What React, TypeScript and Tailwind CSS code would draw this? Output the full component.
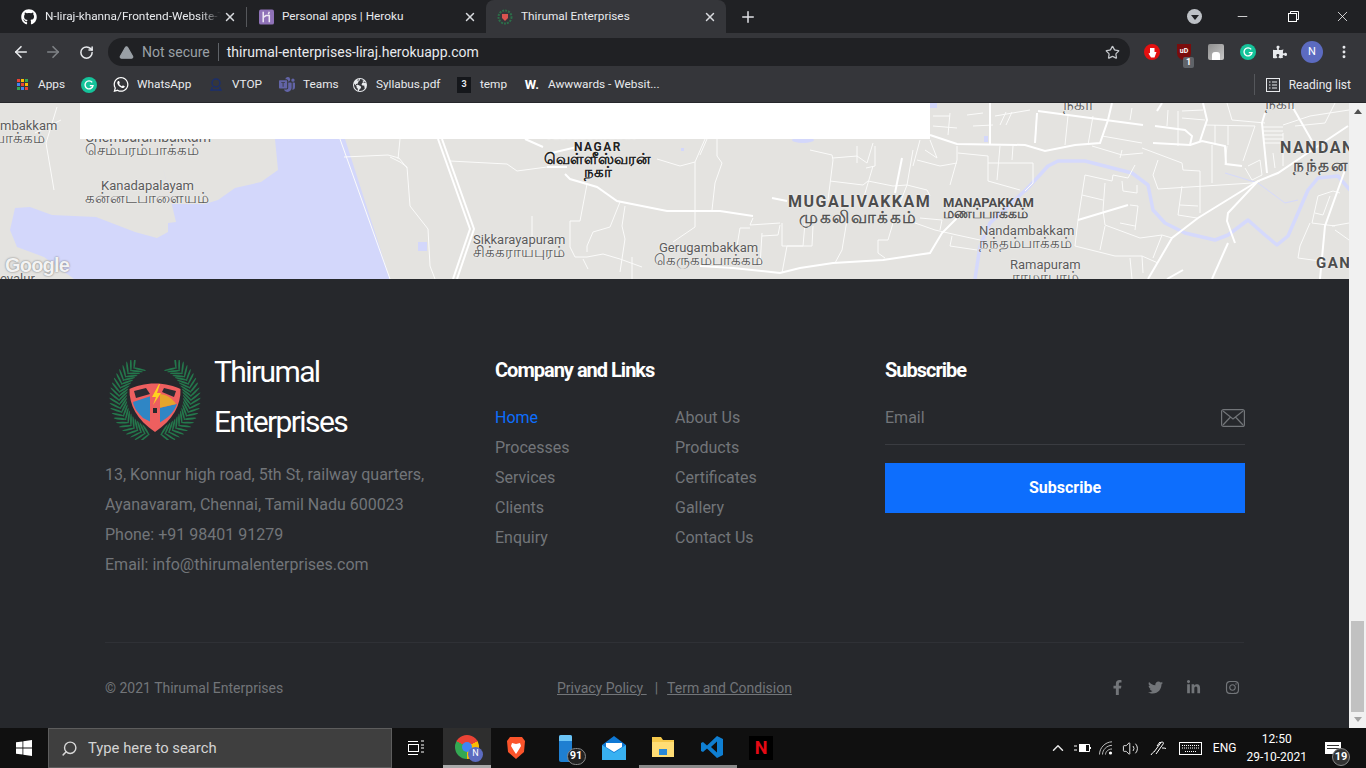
import { FaGithub, FaWhatsapp, FaFacebookF, FaTwitter, FaLinkedinIn, FaInstagram, FaPuzzlePiece } from "react-icons/fa";
import { BsMicrosoftTeams } from "react-icons/bs";
import { FiSearch, FiChevronUp } from "react-icons/fi";
import { IoEarth } from "react-icons/io5";
import { X, Plus, ArrowLeft, ArrowRight, RotateCw, Star, TriangleAlert, Minus, MoreVertical, Volume2 } from "lucide-react";
import type { ReactNode } from "react";

const ui = "font-['Roboto',sans-serif]";

const majorRoads = [
  "438,139 470,229 453,279",
  "442,139 474,229 457,279",
  "565,174 570,179 597,187 617,201 667,211 720,211 753,216",
  "525,139 543,147",
  "547,154 577,147",
  "547,167 567,167",
  "772,198 787,201",
  "902,158 895,193",
  "700,266 733,268 780,273 800,268 833,263 883,260 930,253 942,233 957,218",
  "930,135 957,144 1025,145 1045,151 1075,145 1100,143 1108,120 1112,103",
  "990,103 990,145",
  "1038,111 1143,125",
  "1037,113 1035,143",
  "1155,126 1185,130 1192,136 1190,145 1153,143",
  "1190,145 1202,141 1225,146 1226,164 1242,166",
  "1265,113 1262,123 1267,173",
  "1348,126 1318,146 1278,173 1258,181 1228,213 1227,221 1232,235 1235,243",
  "1258,181 1198,218 1172,238 1148,279",
  "1228,243 1212,279",
  "1292,106 1312,141",
  "1345,170 1325,226 1320,279",
  "1078,220 1128,205",
  "1162,103 1157,111",
  "1167,279 1183,270",
  "1203,103 1207,120 1200,141",
];

const minorRoads = [
  "57,107 46,143 54,190",
  "35,133 61,120",
  "340,139 390,279",
  "344,157 388,155 399,158 407,168",
  "390,157 400,162 407,167 410,206 428,229 430,266 435,279",
  "400,139 398,159",
  "450,161 507,164 517,171 547,167",
  "587,184 580,221 570,221 570,247 575,257 587,257 603,254 620,259 642,267",
  "620,202 610,227 593,232 587,246 587,252",
  "625,206 622,226 625,239 620,272",
  "632,257 632,279",
  "695,162 695,227 673,242",
  "657,159 680,166 695,162 705,139",
  "532,216 532,236",
  "583,259 588,269",
  "717,139 717,156 722,163 715,183 712,210",
  "700,155 707,139",
  "810,150 832,155 833,160 828,200",
  "833,158 857,156 867,163 873,143",
  "857,146 857,163",
  "875,146 875,166 866,168",
  "830,181 863,185 868,181 893,186 907,185 927,190 930,196",
  "873,166 868,183 863,200",
  "913,150 907,185 900,203",
  "920,140 913,166",
  "917,160 940,166 957,163",
  "930,140 937,158 925,150",
  "957,146 957,160 950,185",
  "958,153 988,156 988,181 1020,190",
  "1000,146 997,180",
  "1013,146 1012,160",
  "988,163 1033,163 1033,183 1025,191",
  "753,218 750,225 780,223",
  "782,223 782,246 803,246 805,223",
  "750,228 740,228 737,246",
  "762,236 778,235 780,225",
  "762,233 760,266",
  "787,246 782,273",
  "813,226 812,246 787,246",
  "847,220 842,250 835,263",
  "915,223 935,230 957,235 980,240",
  "893,223 888,240 878,240 878,253 885,258",
  "952,236 950,246 977,250",
  "920,218 942,220 940,230",
  "933,126 957,128",
  "933,116 950,116",
  "950,113 948,135",
  "967,115 983,113",
  "973,126 993,125",
  "995,116 1030,110",
  "1000,125 1006,112",
  "1006,125 1012,112",
  "1085,175 1078,220 1075,246",
  "1085,175 1112,181 1113,175 1128,178 1135,165",
  "1105,183 1103,210 1105,225 1140,238 1162,235 1172,238",
  "1082,195 1103,200",
  "1130,205 1138,206 1135,230",
  "1122,181 1123,191 1137,193 1137,185",
  "1120,223 1135,226",
  "1075,246 1115,256 1142,256 1158,263",
  "1162,235 1153,258",
  "1130,258 1132,279",
  "1142,256 1143,273",
  "1100,250 1105,226",
  "1142,148 1182,163 1183,170 1200,171 1200,213",
  "1158,160 1153,175 1158,189 1252,183 1260,181",
  "1182,186 1178,215 1197,218",
  "1180,205 1198,206",
  "1212,145 1212,183",
  "1227,146 1225,165",
  "1228,125 1228,145",
  "1205,125 1255,126 1243,161",
  "1215,125 1215,145",
  "1102,136 1142,143",
  "1092,146 1122,155 1143,153",
  "1122,150 1120,158",
  "1068,116 1065,145",
  "1093,116 1088,145",
  "1132,108 1130,120",
  "1168,110 1167,126",
  "1178,111 1178,146",
  "1182,118 1205,120",
  "1182,111 1203,110",
  "1263,127 1283,127",
  "1263,131 1283,131",
  "1263,135 1283,135",
  "1263,139 1283,139",
  "1263,143 1283,143",
  "1283,133 1283,166",
  "1273,153 1275,168",
  "1248,166 1260,160 1262,175 1252,180 1245,168",
  "1318,196 1312,223 1335,226",
  "1318,196 1333,191 1340,193",
  "1315,213 1323,215 1330,196",
  "1332,226 1349,223",
  "1335,230 1349,240",
  "1310,223 1300,246 1298,258 1320,261",
  "1227,103 1232,120 1265,123",
  "1295,126 1325,123 1335,103",
  "1283,125 1310,116 1349,110",
];

const rivers = [
  "1025,191 1048,166 1058,161 1085,161 1132,173 1148,185 1153,210 1165,223 1185,233 1215,240 1228,235 1248,220 1265,235 1277,245 1288,236 1308,190 1318,178 1338,176 1350,190",
  "1030,186 990,223 980,246 975,279",
];

const labels = [
  { x: 0, y: 125, t: "mbakkam", s: 13 },
  { x: -6, y: 138, t: "பாக்கம்", s: 15 },
  { x: 85, y: 137, t: "Chembarambakkam", s: 14 },
  { x: 85, y: 150, t: "செம்பரம்பாக்கம்", s: 15 },
  { x: 101, y: 185, t: "Kanadapalayam", s: 13 },
  { x: 85, y: 198, t: "கன்னடபாளையம்", s: 15 },
  { x: 0, y: 278, t: "evalur", s: 13 },
  { x: 545, y: 135, t: "VELLEESWARAN", s: 12, b: true, d: true },
  { x: 574, y: 147, t: "NAGAR", s: 12, b: true, k: true, d: true },
  { x: 544, y: 159, t: "வெள்ளீஸ்வரன்", s: 15, b: true, d: true },
  { x: 584, y: 172, t: "நகர்", s: 15, b: true, d: true },
  { x: 473, y: 239, t: "Sikkarayapuram", s: 13 },
  { x: 473, y: 252, t: "சிக்கராயபுரம்", s: 15 },
  { x: 659, y: 247, t: "Gerugambakkam", s: 13 },
  { x: 654, y: 260, t: "கெருகம்பாக்கம்", s: 15 },
  { x: 788, y: 202, t: "MUGALIVAKKAM", s: 16, b: true, k: true },
  { x: 799, y: 217, t: "முகலிவாக்கம்", s: 17, h: true, k: true },
  { x: 943, y: 202, t: "MANAPAKKAM", s: 13, b: true },
  { x: 943, y: 213, t: "மணப்பாக்கம்", s: 14, h: true },
  { x: 979, y: 230, t: "Nandambakkam", s: 13 },
  { x: 979, y: 243, t: "நந்தம்பாக்கம்", s: 15 },
  { x: 1010, y: 264, t: "Ramapuram", s: 13 },
  { x: 1012, y: 277, t: "ராமாபுரம்", s: 15 },
  { x: 1063, y: 104, t: "நகர்", s: 17 },
  { x: 1265, y: 103, t: "நகர்", s: 17 },
  { x: 1280, y: 148, t: "NANDAN", s: 16, b: true, k: true },
  { x: 1293, y: 165, t: "நந்தன", s: 17, h: true, k: true },
  { x: 1316, y: 263, t: "GAN", s: 15, b: true, k: true },
];

function MapArea() {
  return (
    <div className="relative h-[176px] w-full overflow-hidden bg-[#e4e3e0] font-['Roboto','Noto_Sans',sans-serif]">
      <svg className="absolute inset-0" width="1349" height="176" viewBox="0 103 1349 176" fill="none">
        <path
          d="M275 139 L278 170 L261 182 L235 188 L218 200 L205 204 L172 204 L163 168 L176 222 L168 223 L168 232 L157 238 L135 232 L96 217 L52 215 L30 207 L15 208 L10 230 L17 247 L44 257 L74 279 L390 279 L345 139 Z"
          fill="#d3d7fb"
        />
        <rect x="930" y="103" width="7" height="5" fill="#d3d7fb" />
        <rect x="418" y="242" width="9" height="9" fill="#d3d7fb" />
        <rect x="681" y="148" width="3" height="3" fill="#d3d7fb" />
        <ellipse cx="803" cy="140" rx="11" ry="3" fill="#d3d7fb" />
        <rect x="984" y="136" width="4" height="6" fill="#d3d7fb" />
        {rivers.map((r) => (
          <polyline key={r} points={r} stroke="#d5d9fc" strokeWidth="3.5" strokeLinejoin="round" />
        ))}
        <polyline points="1225,173 1258,183 1285,203 1298,200" stroke="#d5d9fc" strokeWidth="1" />
        {minorRoads.map((r) => (
          <polyline key={r} points={r} stroke="#fbfbfa" strokeWidth="1" />
        ))}
        {majorRoads.map((r) => (
          <polyline key={r} points={r} stroke="#ffffff" strokeWidth="2" />
        ))}
      </svg>
      {labels.map((l) => (
        <span
          key={l.t + l.y}
          className={`absolute -translate-y-1/2 whitespace-nowrap leading-none [text-shadow:0_0_2px_#ffffff] ${l.b ? "font-bold" : "font-normal"} ${l.k ? "tracking-[1.5px]" : ""} ${l.h ? "[-webkit-text-stroke:0.4px_#4d4d4d]" : ""} ${l.d ? "text-[#222222]" : l.b || l.h ? "text-[#4d4d4d]" : "text-[#5b5b5b]"}`}
          style={{ left: l.x, top: l.y - 103, fontSize: l.s }}
        >
          {l.t}
        </span>
      ))}
      <span className="absolute bottom-[2px] left-[5px] font-['Liberation_Sans',sans-serif] text-[20px] font-bold leading-[24px] tracking-[-0.8px] text-[#f3f3f3] [text-shadow:0_0_2px_#6b6b6b]">
        Google
      </span>
      {/* white card from the section above */}
      <div className="absolute left-[80px] top-0 h-[36px] w-[850px] bg-white" />
    </div>
  );
}

function Wreath() {
  const leaves = [];
  for (let i = 0; i < 22; i++) {
    const a = ((100 + i * 6.4) * Math.PI) / 180;
    const sx = 47 + 36 * Math.cos(a);
    const sy = 38 + 37 * Math.sin(a);
    const dir = Math.atan2(Math.cos(a), -Math.sin(a));
    for (const off of [0.85, -0.85]) {
      const d = dir + off;
      leaves.push({ cx: sx + 5.5 * Math.cos(d), cy: sy + 5.5 * Math.sin(d), r: (d * 180) / Math.PI });
    }
  }
  return (
    <>
      {leaves.map((l, i) => (
        <g key={i}>
          <ellipse cx={l.cx} cy={l.cy} rx="6.5" ry="0.9" fill="#24784c" transform={`rotate(${l.r} ${l.cx} ${l.cy})`} />
          <ellipse cx={94 - l.cx} cy={l.cy} rx="6.5" ry="0.9" fill="#24784c" transform={`rotate(${180 - l.r} ${94 - l.cx} ${l.cy})`} />
        </g>
      ))}
    </>
  );
}

function Logo() {
  return (
    <svg width="95" height="80" viewBox="0 0 95 80" className="mt-[14px] ml-[3px] shrink-0">
      <Wreath />
      <path d="M47 22 C58 22 68 25 74 28 C75 46 66 62 47 74 C28 62 19 46 20 28 C26 25 36 22 47 22 Z" fill="#26282c" />
      <path d="M47 23.5 C57 23.5 67 26 72.5 29 C73 45 65 60 47 72 C29 60 21 45 21.5 29 C27 26 37 23.5 47 23.5 Z" fill="#ee5f5f" />
      <path d="M25 42 L43 36 L43 62 L35 58 C30 53 26 48 25 42 Z" fill="#2f86c5" />
      <path d="M51 48 L69 44 C66 52 60 58 51 63 Z" fill="#2f86c5" />
      <path d="M51 34 C58 34 64 38 68 44 L51 48 Z" fill="#e5a52c" />
      <path d="M26 31 L38 28 L42 34 L28 38 Z" fill="#2b2b33" />
      <path d="M68 31 L56 28 L54 32 L66 37 Z" fill="#2b2b33" />
      <path d="M42 33 L52 33 L52 64 L47 69 L42 64 Z" fill="#ee5f5f" />
      <path d="M51 24 L44 37 L48 37 L45 45 L53 33 L49 33 L52 24 Z" fill="#ffd21f" />
      <rect x="45" y="48" width="4" height="5" fill="#26282c" />
    </svg>
  );
}

function BrowserTab(props: { icon: ReactNode; title: string; active?: boolean; width: string; fade?: boolean }) {
  return (
    <div className={`flex h-[33px] items-center pl-[10px] pr-[9px] ${props.width} ${props.active ? "rounded-t-[8px] bg-[#35363a]" : ""}`}>
      <span className="flex w-[17px] shrink-0 justify-center">{props.icon}</span>
      <span className={`ml-[8px] flex-1 overflow-hidden whitespace-nowrap text-[11.8px] text-[#e8eaed] ${props.fade ? "[mask-image:linear-gradient(90deg,#000_88%,transparent)]" : ""}`}>
        {props.title}
      </span>
      <X size={14} strokeWidth={2.5} className="ml-[2px] shrink-0 text-[#d8dade]" />
    </div>
  );
}

function Bookmark(props: { icon: ReactNode; label: string; width: string }) {
  return (
    <div className={`flex items-center ${props.width}`}>
      <span className="flex w-[16px] shrink-0 justify-center">{props.icon}</span>
      <span className="ml-[8px] whitespace-nowrap text-[11.8px] text-[#e8eaed]">{props.label}</span>
    </div>
  );
}

function GrammarlyBadge(props: { size: number }) {
  return (
    <svg width={props.size} height={props.size} viewBox="0 0 16 16">
      <circle cx="8" cy="8" r="8" fill="#15c39a" />
      <path d="M11.2 5.4A4 4 0 1 0 12 8.6H8.8" stroke="#fff" strokeWidth="1.4" fill="none" />
    </svg>
  );
}

function TopChrome() {
  return (
    <div className={`shrink-0 bg-[#35363a] ${ui}`}>
      <div className="flex h-[33px] items-center bg-[#202124] pl-[10px]">
        <BrowserTab fade width="w-[236px]" title="N-liraj-khanna/Frontend-Website-Thirumal" icon={<FaGithub size={16} className="text-white" />} />
        <div className="h-[20px] w-px bg-[#55575b]" />
        <BrowserTab
          width="w-[239px]"
          title="Personal apps | Heroku"
          icon={
            <svg width="16" height="16" viewBox="0 0 16 16" className="ml-[2px]">
              <rect width="16" height="16" rx="2" fill="#8f72b8" />
              <path d="M4.5 2.5v11M4.5 8.5l3-2h3.5v7M11 2.5l-1 2.5" stroke="#eee8f5" strokeWidth="1.6" fill="none" />
            </svg>
          }
        />
        <BrowserTab
          active
          width="w-[240px]"
          title="Thirumal Enterprises"
          icon={
            <svg width="16" height="16" viewBox="0 0 16 16">
              <circle cx="8" cy="8" r="6.5" fill="none" stroke="#2c6e49" strokeWidth="2" strokeDasharray="2 1" />
              <path d="M5 5h6v4l-3 3-3-3z" fill="#d9534f" />
            </svg>
          }
        />
        <Plus size={18} strokeWidth={2} className="ml-[13px] text-[#dfe1e5]" />
        <div className="flex-1" />
        <div className="mr-[33px] flex h-[15px] w-[15px] items-center justify-center rounded-full bg-[#bdc1c6]">
          <div className="mt-[2px] border-x-[4px] border-t-[5px] border-x-transparent border-t-[#202124]" />
        </div>
        <Minus size={15} strokeWidth={1.25} className="mr-[38px] text-white" />
        <svg width="11" height="11" viewBox="0 0 11 11" fill="none" stroke="#fff" className="mr-[35px]">
          <rect x="0.5" y="2.5" width="8" height="8" />
          <path d="M2.5 2.5V0.5H10.5V8.5H8.5" />
        </svg>
        <X size={17} strokeWidth={1.1} className="mr-[15px] text-white" />
      </div>

      <div className="flex h-[38px] items-center pl-[12px]">
        <ArrowLeft size={18} strokeWidth={2.2} className="text-[#e8eaed]" />
        <ArrowRight size={18} strokeWidth={2.2} className="ml-[14px] text-[#7f8286]" />
        <RotateCw size={15} strokeWidth={2.4} className="ml-[17px] text-[#e8eaed]" />
        <div className="ml-[14px] flex h-[28px] w-[1022px] items-center rounded-full bg-[#202124] pl-[11px] pr-[10px]">
          <TriangleAlert size={15} className="fill-[#9aa0a6] text-[#9aa0a6]" />
          <span className="ml-[8px] text-[14px] text-[#9aa0a6]">Not secure</span>
          <div className="ml-[8px] h-[18px] w-px bg-[#5f6368]" />
          <span className="ml-[8px] flex-1 text-[14px] text-[#e8eaed]">thirumal-enterprises-liraj.herokuapp.com</span>
          <Star size={15} className="text-[#c4c7cb]" />
        </div>
        <div className="ml-[14px] flex h-[16px] w-[16px] items-center justify-center rounded-full border-[2px] border-[#e31010] bg-[#e31010]">
          <svg width="9" height="11" viewBox="0 0 9 11" fill="#fff">
            <path d="M2 1h4.5v4H8.5L6.5 10.5H3L0.5 6.5 2 6Z" />
          </svg>
        </div>
        <div className="relative ml-[17px] h-[16px] w-[14px] rounded-b-[7px] bg-[#7a0d0d] text-center text-[7px] font-bold leading-[14px] text-white">
          uD
          <span className="absolute -bottom-[8px] left-[6px] h-[11px] w-[11px] rounded-[2px] bg-[#5f6368] text-[9px] font-bold leading-[11px]">1</span>
        </div>
        <div className="ml-[17px] flex h-[16px] w-[16px] items-end justify-center rounded-[2px] bg-[linear-gradient(135deg,#8e8e8e,#c9c9c9)]">
          <div className="h-[8px] w-[8px] rounded-t-[3px] bg-white" />
        </div>
        <span className="ml-[16px]"><GrammarlyBadge size={16} /></span>
        <FaPuzzlePiece size={14} className="ml-[17px] text-[#e8eaed]" />
        <div className="ml-[14px] flex h-[22px] w-[22px] items-center justify-center rounded-full bg-[#5c6bc0] text-[11px] text-white">N</div>
        <MoreVertical size={16} strokeWidth={2.4} className="ml-[13px] text-[#e8eaed]" />
      </div>

      <div className="flex h-[32px] items-center border-b border-[#26272b] pb-[4px] pl-[14px]">
        <Bookmark
          width="w-[67px]"
          label="Apps"
          icon={
            <div className="grid grid-cols-3 gap-[1px]">
              {["bg-[#ea4335]", "bg-[#fbbc04]", "bg-[#34a853]", "bg-[#4285f4]", "bg-[#ea4335]", "bg-[#fbbc04]", "bg-[#34a853]", "bg-[#4285f4]", "bg-[#ea4335]"].map((c, i) => (
                <div key={i} className={`h-[3px] w-[3px] ${c}`} />
              ))}
            </div>
          }
        />
        <span className="w-[32px]"><GrammarlyBadge size={16} /></span>
        <Bookmark width="w-[95px]" label="WhatsApp" icon={<FaWhatsapp size={17} className="text-white" />} />
        <Bookmark
          width="w-[71px]"
          label="VTOP"
          icon={
            <svg width="16" height="16" viewBox="0 0 16 16" fill="none" stroke="#1c2f6b" strokeWidth="1.5">
              <circle cx="8" cy="6" r="4" />
              <path d="M2 13h12M4 10v4M12 10v4" />
            </svg>
          }
        />
        <Bookmark width="w-[73px]" label="Teams" icon={<BsMicrosoftTeams size={16} className="text-[#6264a7]" />} />
        <Bookmark width="w-[104px]" label="Syllabus.pdf" icon={<IoEarth size={16} className="text-[#e8eaed]" />} />
        <Bookmark
          width="w-[68px]"
          label="temp"
          icon={<div className="flex h-[16px] w-[14px] items-center justify-center bg-[#15171b] text-[9px] font-bold text-[#e8eaed]">3</div>}
        />
        <Bookmark width="w-[300px]" label="Awwwards - Websit..." icon={<span className="text-[13px] font-bold text-white">W.</span>} />
        <div className="flex-1" />
        <div className="mr-[11px] h-[21px] w-px bg-[#55575b]" />
        <svg width="14" height="14" viewBox="0 0 14 14" fill="none" stroke="#e8eaed">
          <rect x="0.5" y="0.5" width="13" height="13" />
          <path d="M3 4h1.5M6 4h5M3 7h1.5M6 7h5M3 10h1.5M6 10h5" />
        </svg>
        <span className="ml-[9px] mr-[15px] text-[12px] text-[#e8eaed]">Reading list</span>
      </div>
    </div>
  );
}

function Footer() {
  const links = ["Home", "About Us", "Processes", "Products", "Services", "Certificates", "Clients", "Gallery", "Enquiry", "Contact Us"];
  return (
    <footer className="h-[449px] bg-[#26282c] px-[105px] font-['Roboto',sans-serif] text-[16px] text-[#727579]">
      <div className="grid h-[363px] grid-cols-[390px_390px_360px] pt-[68px]">
        <div>
          <div className="flex">
            <div className="-mt-px">
              <Logo />
            </div>
            <h2 className="ml-[11px] text-[30px] font-normal leading-[50px] tracking-[-1.6px] text-white">
              Thirumal
              <br />
              Enterprises
            </h2>
          </div>
          <div className="mt-[13px] leading-[30px]">
            <p>13, Konnur high road, 5th St, railway quarters,</p>
            <p>Ayanavaram, Chennai, Tamil Nadu 600023</p>
            <p>Phone: +91 98401 91279</p>
            <p>Email: info@thirumalenterprises.com</p>
          </div>
        </div>
        <div>
          <h3 className="mb-[10px] h-[46px] text-[20px] font-bold leading-[46px] tracking-[-1px] text-white">Company and Links</h3>
          <ul className="grid grid-cols-[180px_180px] leading-[30px]">
            {links.map((l) => (
              <li key={l} className={l === "Home" ? "text-[#0d6efd]" : ""}>
                {l}
              </li>
            ))}
          </ul>
        </div>
        <div>
          <h3 className="h-[46px] text-[20px] font-bold leading-[46px] tracking-[-1px] text-white">Subscribe</h3>
          <div className="flex h-[52px] items-center justify-between border-b border-[#3a3c41] pb-[1px]">
            <span>Email</span>
            <svg width="24" height="18" viewBox="0 0 24 18" fill="none" stroke="#727579" strokeWidth="1.2">
              <rect x="0.6" y="0.6" width="22.8" height="16.8" rx="2" />
              <path d="M2 2l10 8 10-8M2 16l7.5-8M22 16l-7.5-8" />
            </svg>
          </div>
          <button className="mt-[18px] h-[50px] w-full bg-[#0d6efd] text-[16px] font-bold text-white">Subscribe</button>
        </div>
      </div>
      <div className="flex h-[86px] items-center justify-between border-t border-[#2f3136] pt-[5px] text-[14px]">
        <span className="w-[452px]">© 2021 Thirumal Enterprises</span>
        <div className="flex-1 whitespace-nowrap">
          <span className="underline">Privacy Policy </span>
          <span className="ml-[8px] mr-[9px]">|</span>
          <span className="underline">Term and Condision</span>
        </div>
        <div className="-mt-[2px] flex items-center gap-[23px] pr-[4px] text-[#727579]">
          <FaFacebookF size={15} />
          <FaTwitter size={15} />
          <FaLinkedinIn size={15} />
          <span className="ml-[1px]"><FaInstagram size={15} /></span>
        </div>
      </div>
    </footer>
  );
}

function Scrollbar() {
  return (
    <div className="flex w-[17px] shrink-0 flex-col items-center justify-between bg-[#f1f1f1] py-[6px]">
      <div className="border-x-[4px] border-b-[5px] border-x-transparent border-b-[#505050]" />
      <div className="flex flex-col items-center">
        <div className="h-[91px] w-[13px] bg-[#c1c1c1]" />
        <div className="mt-[5px] border-x-[4px] border-t-[5px] border-x-transparent border-t-[#a3a3a3]" />
      </div>
    </div>
  );
}

function Taskbar() {
  return (
    <div className={`flex h-[40px] shrink-0 items-center bg-[#101010] text-white ${ui}`}>
      <div className="flex w-[48px] justify-center">
        <svg width="16" height="16" viewBox="0 0 16 16" fill="#fff">
          <path d="M0 2.3L6.5 1.4V7.6H0ZM7.3 1.3L16 0V7.6H7.3ZM0 8.4H6.5V14.6L0 13.7ZM7.3 8.4H16V16L7.3 14.7Z" />
        </svg>
      </div>
      <div className="flex h-[40px] w-[344px] items-center border border-[#5d5d5d] bg-[#3f3f3f] pl-[12px]">
        <FiSearch size={17} className="-scale-x-100 text-[#d8d8d8]" />
        <span className="ml-[10px] text-[14.8px] text-[#d4d4d4]">Type here to search</span>
      </div>
      <div className="flex w-[51px] justify-center pr-[4px]">
        <svg width="16" height="16" viewBox="0 0 16 16" fill="none" stroke="#fff" strokeWidth="1">
          <rect x="0.5" y="4.5" width="10" height="7" />
          <path d="M0 1.5h10M0 14.5h10M13 1h3M13 5h3M13 8h3M13 12h3" />
        </svg>
      </div>
      <div className="flex h-[40px] w-[48px] items-center justify-center border-b-[3px] border-[#aaaaaa] bg-[#2e2e2e]">
        <div className="relative h-[24px] w-[24px]">
          <div className="h-[24px] w-[24px] rounded-full bg-[conic-gradient(from_-60deg,#ea4335_0_120deg,#fbbc04_120deg_240deg,#34a853_240deg_360deg)]" />
          <div className="absolute left-[7px] top-[7px] h-[10px] w-[10px] rounded-full bg-[#4285f4]" />
          <div className="absolute -bottom-[3px] -right-[4px] flex h-[15px] w-[15px] items-center justify-center rounded-full bg-[#5c6bc0] text-[9px]">N</div>
        </div>
      </div>
      <div className="flex w-[50px] justify-center">
        <svg width="20" height="24" viewBox="0 0 20 24">
          <path d="M4 1h12l3 4-1 11-8 7-8-7L1 5z" fill="#fb542b" />
          <path d="M6 7l4 1 4-1 1 3-3 5-2 3-2-3-3-5z" fill="#fff" />
        </svg>
      </div>
      <div className="flex w-[48px] justify-center">
        <div className="relative h-[27px] w-[13px] rounded-[2px] bg-[#1f7fd1]">
          <div className="h-[6px] rounded-t-[2px] bg-[#6cc4f5]" />
          <span className="absolute -right-[14px] bottom-[-3px] flex h-[17px] w-[19px] items-center justify-center rounded-full border border-[#888] bg-[#222] text-[11px] font-bold">91</span>
        </div>
      </div>
      <div className="flex w-[50px] justify-center">
        <svg width="24" height="24" viewBox="0 0 24 24">
          <path d="M0 9L12 0l12 9v15H0z" fill="#0f78d4" />
          <path d="M0 9l12 8 12-8v15H0z" fill="#38b1f1" />
          <path d="M4 7h16v4l-8 5-8-5z" fill="#fff" />
        </svg>
      </div>
      <div className="flex h-[40px] w-[48px] items-center justify-center border-b-[3px] border-[#8a8a8a]">
        <svg width="22" height="20" viewBox="0 0 22 20">
          <path d="M0 0h9l2 3h11v17H0z" fill="#f6c94c" />
          <path d="M0 5h22v15H0z" fill="#ffdd75" />
          <rect x="7" y="12" width="8" height="6" fill="#2a89d8" />
        </svg>
      </div>
      <div className="flex h-[40px] w-[50px] items-center justify-center border-b-[3px] border-[#8a8a8a]">
        <svg width="24" height="24" viewBox="0 0 24 24">
          <path d="M17 1l6 3v16l-6 3L7 13.5 3 17l-2-1V8l2-1 4 3.5z" fill="#0f7fd2" />
          <path d="M17 6.5L11 12l6 5.5z" fill="#101010" />
        </svg>
      </div>
      <div className="flex w-[48px] justify-center">
        <div className="flex h-[24px] w-[24px] items-center justify-center bg-black text-[18px] font-bold leading-none text-[#e50914]">N</div>
      </div>
      <div className="flex-1" />
      <FiChevronUp size={18} className="mr-[7px] text-[#e6e6e6]" />
      {/* battery with plug */}
      <svg width="17" height="12" viewBox="0 0 17 12" fill="none" stroke="#fff" className="mr-[8px]">
        <path d="M5 2.5h10.5v7H5" />
        <rect x="5" y="3" width="7" height="6" fill="#fff" stroke="none" />
        <path d="M16.5 5v2M0 4h3M0 8h3" />
      </svg>
      {/* wifi */}
      <svg width="14" height="14" viewBox="0 0 14 14" fill="none" stroke="#bdbdbd" className="mr-[9px]">
        <path d="M0.5 13.5C0.5 7 6 1 13 0.8M3.5 13.5C3.5 9 7.5 4.5 13 4.3M6.5 13.5C6.5 11 9 8 13 8" />
        <circle cx="11.5" cy="12" r="1.6" fill="#fff" stroke="none" />
      </svg>
      <Volume2 size={17} strokeWidth={1.25} className="mr-[11px] text-white" />
      {/* pen */}
      <svg width="17" height="16" viewBox="0 0 17 16" fill="none" stroke="#fff" className="mr-[12px]">
        <path d="M4 12L11 2.5c1-1.3 3-.2 2.3 1.3L6 14M11 3l-1-1-3 4" />
        <path d="M1 15c1-1.5 2-3 3-3M12 8c1.5 0 3 0 4 .5" />
      </svg>
      {/* touch keyboard */}
      <svg width="23" height="13" viewBox="0 0 23 13" fill="none" stroke="#fff" className="mr-[11px]">
        <rect x="0.5" y="0.5" width="22" height="12" />
        <path d="M3 3.5h17M3 6h17M6 9.5h11" strokeDasharray="1 1" />
      </svg>
      <span className="mr-[10px] text-[12px]">ENG</span>
      <div className="mr-[18px] flex flex-col items-center text-[12px] leading-[18px]">
        <span>12:50</span>
        <span>29-10-2021</span>
      </div>
      <div className="relative mr-[25px] h-[12px] w-[16px] bg-white">
        <div className="mx-[2px] mt-[3px] h-[1px] bg-[#333]" />
        <div className="mx-[2px] mt-[2px] h-[1px] bg-[#333]" />
        <span className="absolute -bottom-[12px] left-[7px] flex h-[18px] w-[18px] items-center justify-center rounded-full border border-[#888] bg-[#333] text-[11px] font-bold">19</span>
      </div>
    </div>
  );
}

export default function App() {
  return (
    <div className="flex h-[768px] w-[1366px] flex-col overflow-hidden bg-[#26282c]">
      <TopChrome />
      <div className="flex h-[625px]">
        <main className="w-[1349px]">
          <MapArea />
          <Footer />
        </main>
        <Scrollbar />
      </div>
      <Taskbar />
    </div>
  );
}
